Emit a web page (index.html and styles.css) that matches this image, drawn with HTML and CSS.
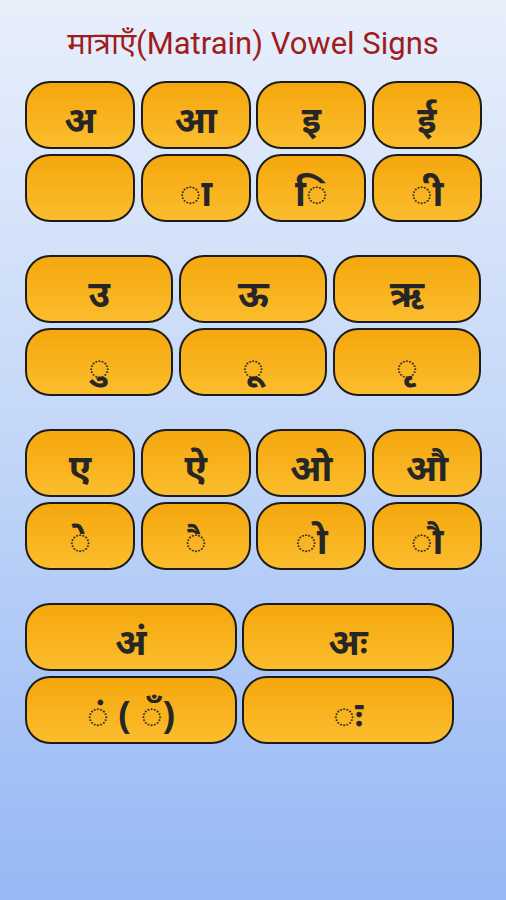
FILE: index.html
```html
<!DOCTYPE html>
<html lang="hi">
<head>
<meta charset="utf-8">
<title>Matrain</title>
<link rel="stylesheet" href="styles.css">
</head>
<body>
<div class="screen">
  <h1 class="title">मात्राएँ(Matrain) Vowel Signs</h1>

  <section class="group cols-4">
    <div class="key">अ</div>
    <div class="key">आ</div>
    <div class="key">इ</div>
    <div class="key">ई</div>
    <div class="key"></div>
    <div class="key">&#x25CC;ा</div>
    <div class="key">ि</div>
    <div class="key">ी</div>
  </section>

  <section class="group cols-3">
    <div class="key">उ</div>
    <div class="key">ऊ</div>
    <div class="key">ऋ</div>
    <div class="key">ु</div>
    <div class="key">ू</div>
    <div class="key">ृ</div>
  </section>

  <section class="group cols-4">
    <div class="key">ए</div>
    <div class="key">ऐ</div>
    <div class="key">ओ</div>
    <div class="key">औ</div>
    <div class="key">े</div>
    <div class="key">ै</div>
    <div class="key">ो</div>
    <div class="key">ौ</div>
  </section>

  <section class="group cols-2">
    <div class="key">अं</div>
    <div class="key">अः</div>
    <div class="key">ं ( ँ)</div>
    <div class="key">ः</div>
  </section>
</div>
</body>
</html>
```
FILE: styles.css
```css
html, body {
  margin: 0;
  padding: 0;
}
body {
  width: 506px;
  height: 900px;
  background: linear-gradient(180deg, #e8effb 0%, #c6d9f8 45%, #97b8f5 100%);
  font-family: "Noto Sans", "Noto Sans Devanagari", "Lohit Devanagari", sans-serif;
  overflow: hidden;
}
.screen {
  display: flex;
  flex-direction: column;
  padding: 0 0 0 25px;
}
.title {
  margin: 24px 0 0 -25px;
  width: 506px;
  text-align: center;
  font-family: Roboto, "Noto Sans", "Noto Sans Devanagari", sans-serif;
  font-weight: 400;
  font-size: 31px;
  line-height: 40px;
  color: #9e1c1c;
  height: 57px;
}
.group {
  display: grid;
  row-gap: 5px;
  column-gap: 5.5px;
  margin-bottom: 33px;
}
.cols-4 { grid-template-columns: repeat(4, 1fr); width: 457px; }
.cols-3 { grid-template-columns: repeat(3, 1fr); width: 456px; }
.cols-2 { grid-template-columns: repeat(2, 1fr); width: 429px; }
.key {
  box-sizing: border-box;
  height: 68px;
  border: 2px solid #1c1c1c;
  border-radius: 25px;
  background: linear-gradient(180deg, #f5a70d 0%, #fbbd2d 100%);
  display: flex;
  align-items: center;
  justify-content: center;
  padding-top: 6px;
  font-weight: 700;
  font-size: 37px;
  color: #262626;
  line-height: 1;
}
```
